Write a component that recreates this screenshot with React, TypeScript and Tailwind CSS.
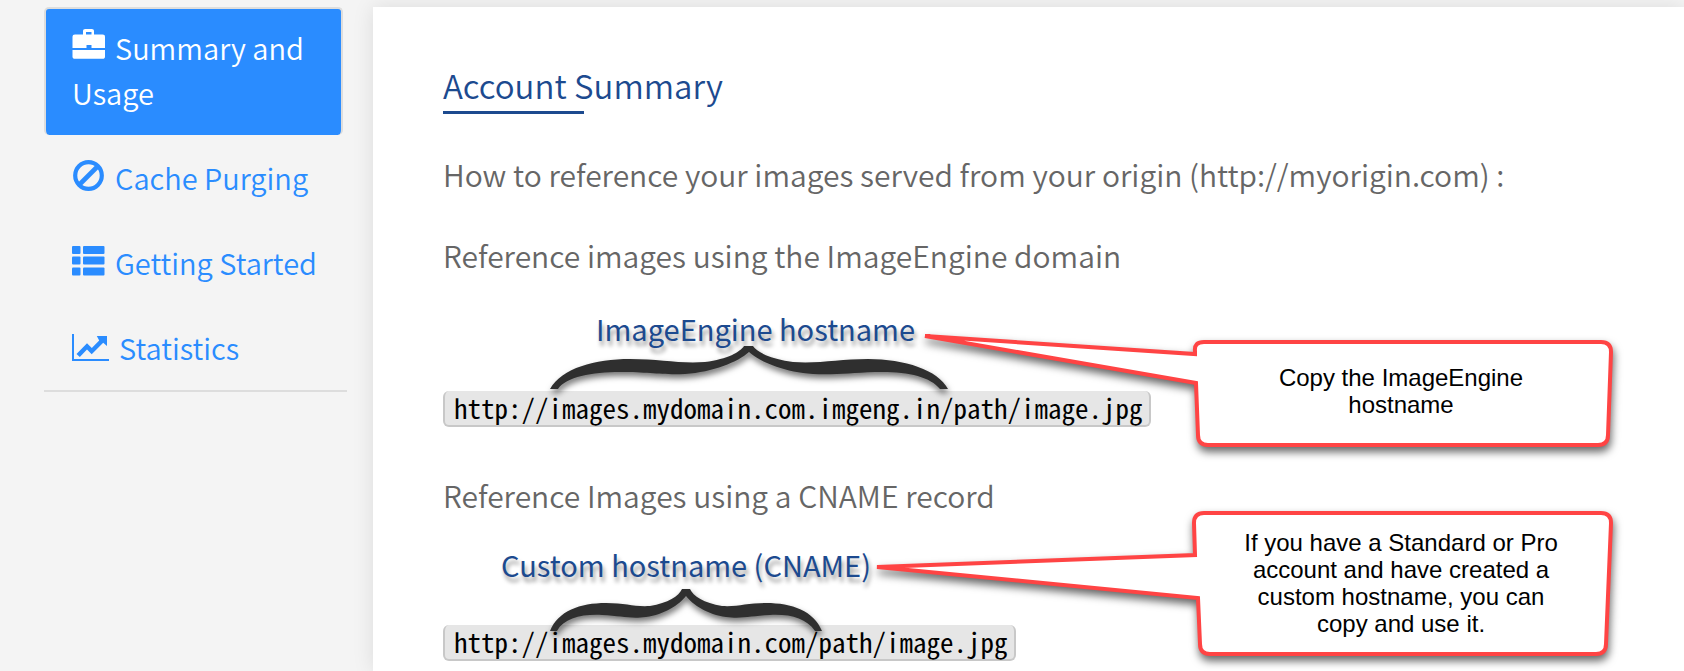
import type { ReactNode } from "react";

const sans = "font-['Noto_Sans_CJK_SC','Noto_Sans',sans-serif]";
const iconClass = "-mb-px mr-[9px] inline-block align-baseline";

function Briefcase() {
  return (
    <svg width="34" height="32" viewBox="0 0 34 32" fill="currentColor" className={iconClass} aria-hidden="true">
      <path fillRule="evenodd" d="M11 5.500V2.200C11 .8 11.800 0 13.200 0h6.600C21.200 0 22 .8 22 2.200v3.300h8.500c1.900 0 2.500.8 2.500 2.500v11H19.500v-3h-5v3H.5V8c0-1.700.8-2.500 2.500-2.500zM14 5.500h5.500V3H14z" />
      <path d="M.5 21H33v6.500c0 1.500-.8 2.300-2.500 2.300H3C1.300 29.800.5 29 .5 27.500z" />
    </svg>
  );
}

function Ban() {
  return (
    <svg width="34" height="32" viewBox="0 0 34 32" fill="none" stroke="currentColor" className={iconClass} aria-hidden="true">
      <circle cx="16.500" cy="16.500" r="13.300" strokeWidth="4.200" />
      <path d="M7 26 26 7" strokeWidth="4.600" />
    </svg>
  );
}

function ThList() {
  return (
    <svg width="34" height="32" viewBox="0 0 34 32" fill="currentColor" className={iconClass} aria-hidden="true">
      <rect x="0" y="2" width="8.500" height="8" rx="1" />
      <rect x="11" y="2" width="21.500" height="8" rx="1" />
      <rect x="0" y="12.500" width="8.500" height="8" rx="1" />
      <rect x="11" y="12.500" width="21.500" height="8" rx="1" />
      <rect x="0" y="23.500" width="8.500" height="8" rx="1" />
      <rect x="11" y="23.500" width="21.500" height="8" rx="1" />
    </svg>
  );
}

function LineChart() {
  return (
    <svg width="38" height="32" viewBox="0 0 38 32" fill="currentColor" className={iconClass} aria-hidden="true">
      <path d="M0 5h2v25h35v2H0z" />
      <path d="M4.500 25 15 14.300l4.800 4.700 7.400-7.400L24.800 7H35v10l-3.800-3.200L19.700 25.300 15 20.500 7.800 28z" />
    </svg>
  );
}

function NavItem({ icon, label, active }: { icon: ReactNode; label: string; active?: boolean }) {
  return (
    <li>
      <a
        href="#"
        aria-current={active ? "page" : undefined}
        className={
          active
            ? "block rounded-[5px] border-2 border-b-0 border-[#dddddd] bg-[#2a8cff] pt-4 pr-4 pb-5 pl-[26px] text-white"
            : "block border-2 border-transparent py-[18px] pr-4 pl-[26px] text-[#2a8cff]"
        }
      >
        {icon}
        {label}
      </a>
    </li>
  );
}

function Brace({ width, d }: { width: number; d: string }) {
  return (
    <svg
      width={width}
      height="44"
      viewBox={`0 0 ${width} 44`}
      fill="#2f2f2f"
      className="block overflow-visible drop-shadow-[1px_4px_3px_rgba(0,0,0,0.55)]"
      aria-hidden="true"
    >
      <path d={d} />
    </svg>
  );
}

function Outline({ width, height, d }: { width: number; height: number; d: string }) {
  return (
    <svg
      width={width}
      height={height}
      viewBox={`0 0 ${width} ${height}`}
      fill="#fff"
      stroke="#ff4444"
      strokeWidth="4"
      className="block overflow-visible drop-shadow-[1px_5px_4px_rgba(0,0,0,0.6)]"
      aria-hidden="true"
    >
      <path d={d} />
    </svg>
  );
}

const noteText =
  "absolute inset-y-0 right-0 flex w-[428px] items-center justify-center px-11 text-center font-['Liberation_Sans',Arial,sans-serif] text-2xl leading-[27px] font-normal text-black";
const labelText =
  "text-[29px] leading-[45px] font-normal whitespace-nowrap text-[#1c4a8f] [text-shadow:2px_5px_4px_rgba(0,0,0,0.4)]";
const codeText =
  "block w-fit rounded-md border-2 border-t-0 border-[#c8c8c8] bg-[#e6e6e6] pr-1.5 pl-[9px] font-['Noto_Sans_Mono_CJK_SC','Liberation_Mono',monospace] text-[27px] leading-[34px] font-normal whitespace-nowrap text-black";

export default function App() {
  return (
    <div className={`flex h-screen items-stretch overflow-hidden bg-[#f4f4f4] pt-[7px] pl-11 font-[350] ${sans}`}>
      <nav className="w-[303px] shrink-0">
        <ul className="border-b-2 border-[#dddddd] pr-1 text-[29px] leading-[45px]">
          <NavItem active icon={<Briefcase />} label="Summary and Usage" />
          <NavItem icon={<Ban />} label="Cache Purging" />
          <NavItem icon={<ThList />} label="Getting Started" />
          <NavItem icon={<LineChart />} label="Statistics" />
        </ul>
      </nav>
      <main className="ml-[26px] min-w-0 grow bg-white pt-[54px] pl-[70px] text-[30px] leading-[45px] text-[#666666] shadow-[0_0_20px_rgba(0,0,0,0.1)]">
        <h1 className="w-fit text-[33px] leading-[48px] text-[#1c4a8f] after:mt-0.5 after:block after:h-[3px] after:w-[141px] after:bg-[#1c4a8f]">
          Account Summary
        </h1>
        <p className="mt-[38px]">How to reference your images served from your origin (http://myorigin.com) :</p>

        <section className="relative mt-9">
          <h2>Reference images using the ImageEngine domain</h2>
          <div className="pt-7 pl-[153px]">
            <p className={labelText}>ImageEngine hostname</p>
          </div>
          <div className="-mt-1 pl-[107px]">
            <Brace
              width={400}
              d="M0 42C12 21 45 12 80 12C110 12 130 17 155 15C178 12 190 5 194 -1H203C207 5 220 12 243 15C268 17 290 12 318 12C355 12 388 23 398 42H390C380 29 355 24 325 25C300 26 285 28 263 27C235 25 210 15 199 5C188 15 163 25 135 27C110 28 100 25 70 25C42 25 16 30 8 42Z"
            />
          </div>
          <code className={codeText}>http://images.mydomain.com.imgeng.in/path/image.jpg</code>
          <aside className="absolute top-[103px] left-[482px]">
            <Outline
              width={690}
              height={110}
              d="M0 0L270 18V15Q269 6 279 6H676Q686 6 686 16L683 99Q683 109 673 109H283Q273 109 273 99L271 47Z"
            />
            <p className={noteText}>Copy the ImageEngine hostname</p>
          </aside>
        </section>

        <section className="relative mt-[46px]">
          <h2>Reference Images using a CNAME record</h2>
          <div className="pt-6 pl-[58px]">
            <p className={labelText}>Custom hostname (CNAME)</p>
          </div>
          <div className="mt-0.5 -mb-2 pl-[107px]">
            <Brace
              width={272}
              d="M0 42C8 22 30 14 56 14C76 14 84 18 100 17C118 14 129 7 132 0H140C143 7 154 14 172 17C188 18 196 14 216 14C242 14 264 22 272 42H265C256 29 240 25 220 26C200 27 192 30 176 28C158 26 142 15 136 7C130 15 114 26 96 28C80 30 72 27 52 26C32 25 14 29 7 42Z"
            />
          </div>
          <code className={codeText}>http://images.mydomain.com/path/image.jpg</code>
          <aside className="absolute top-[38px] left-[434px]">
            <Outline
              width={738}
              height={144}
              d="M0 56L318 44L317 12Q317 2 327 2H724Q734 2 734 12L729 133Q729 143 719 143H333Q323 143 323 133L321 87Z"
            />
            <p className={noteText}>If you have a Standard or Pro account and have created a custom hostname, you can copy and use it.</p>
          </aside>
        </section>
      </main>
    </div>
  );
}
